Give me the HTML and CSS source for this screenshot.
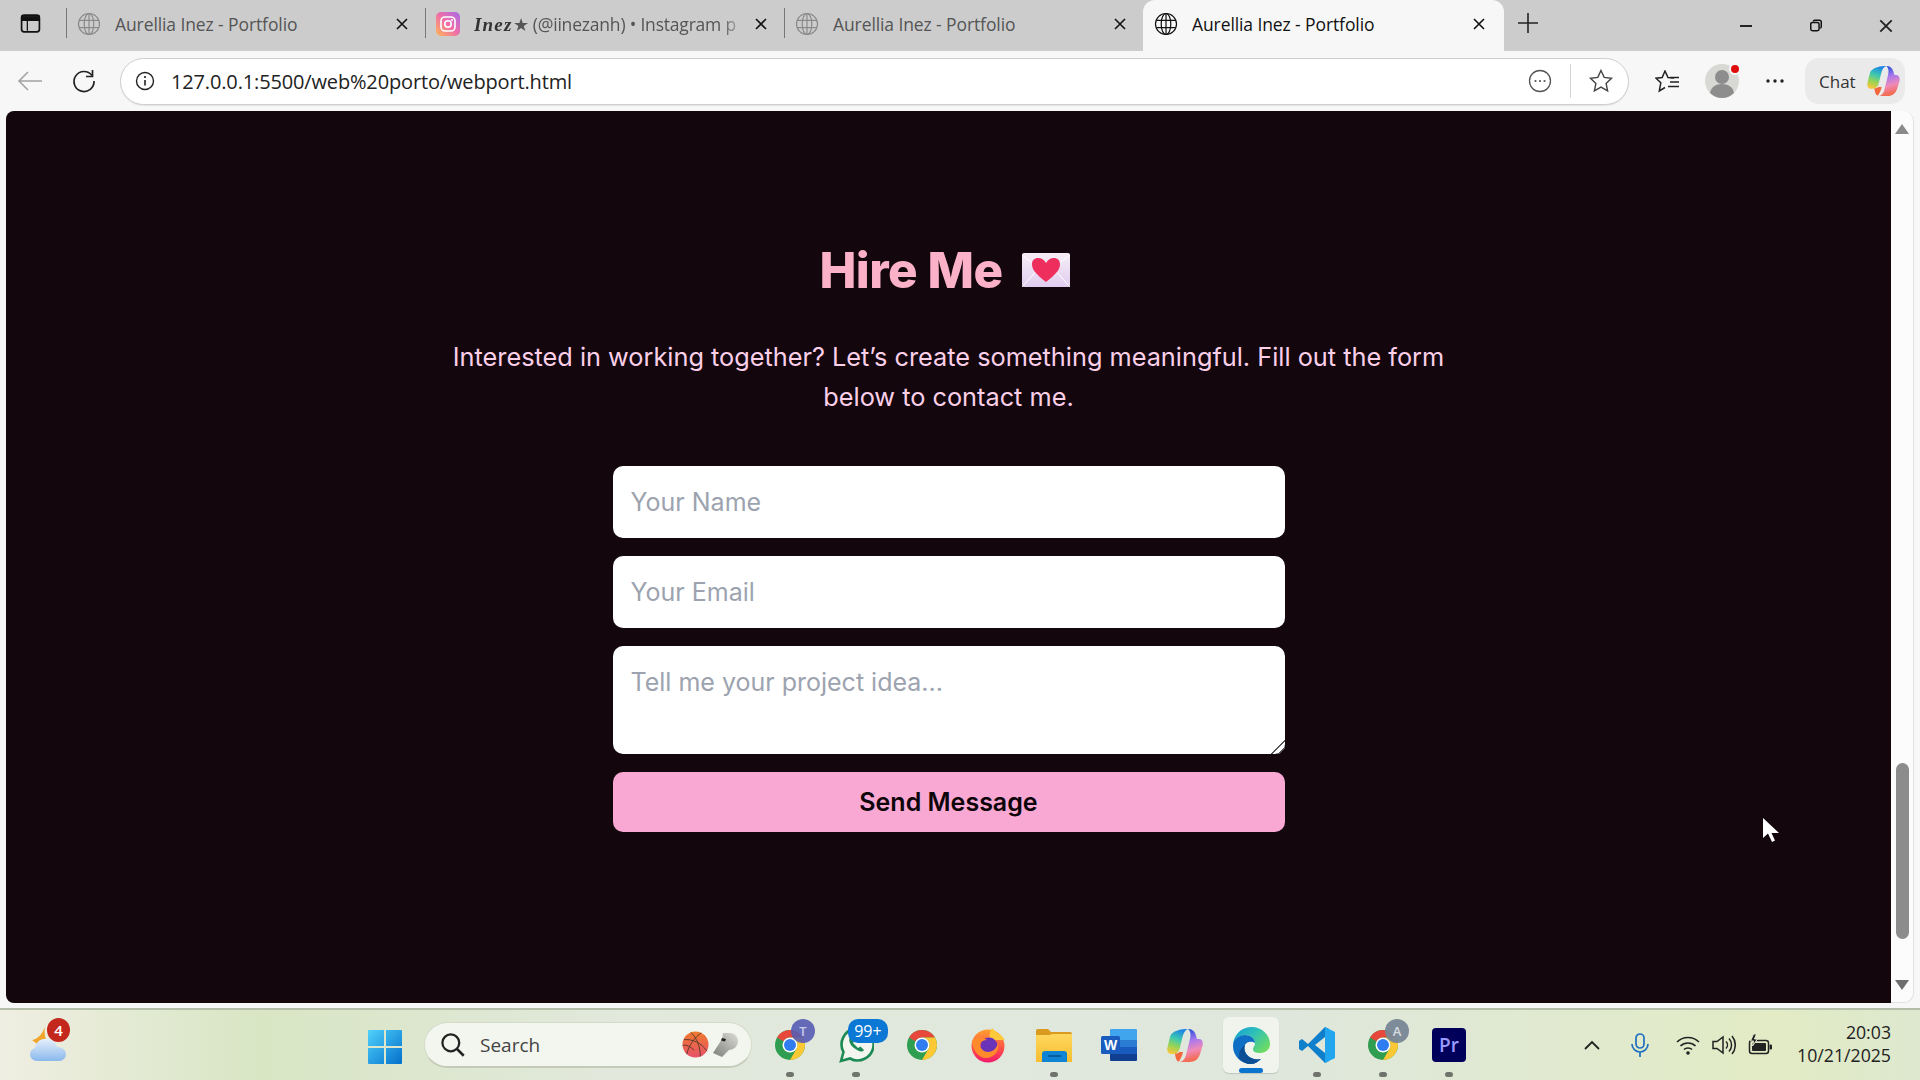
FILE: index.html
```html
<!DOCTYPE html>
<html lang="en">
<head>
    <meta charset="UTF-8">
    <title>Aurellia Inez - Portfolio</title>
    <link rel="stylesheet" href="styles.css">
</head>
<body>
    <svg class="defs" aria-hidden="true">
        <defs>
            <linearGradient id="igGrad" x1="0" y1="1" x2="1" y2="0"><stop offset="0" stop-color="#fdb653"/><stop offset=".5" stop-color="#f06fa8"/><stop offset="1" stop-color="#a869e8"/></linearGradient>
            <linearGradient id="winGrad" x1="0" y1="0" x2="1" y2="1"><stop offset="0" stop-color="#4fd2fb"/><stop offset="1" stop-color="#0470cb"/></linearGradient>
            <linearGradient id="cloudGrad" x1="0" y1="0" x2="0" y2="1"><stop offset="0" stop-color="#e6effb"/><stop offset="1" stop-color="#8ab8ec"/></linearGradient>
            <linearGradient id="copGrad" x1="0.6" y1="0" x2="0.3" y2="1"><stop offset="0" stop-color="#1b83e6"/><stop offset=".4" stop-color="#3ec8b0"/><stop offset=".7" stop-color="#96d455"/><stop offset="1" stop-color="#f8c63a"/></linearGradient>
            <linearGradient id="copGrad2" x1="0.4" y1="0" x2="0.6" y2="1"><stop offset="0" stop-color="#1f4fd6"/><stop offset=".35" stop-color="#a878ee"/><stop offset=".65" stop-color="#f08ab8"/><stop offset="1" stop-color="#f4643a"/></linearGradient>
            <linearGradient id="edgeGrad" x1="0" y1="0" x2="1" y2="0.7"><stop offset="0" stop-color="#139bd8"/><stop offset=".5" stop-color="#2fc1b8"/><stop offset="1" stop-color="#6cdb62"/></linearGradient>
            <linearGradient id="foxGrad" x1="0" y1="0" x2="0" y2="1"><stop offset="0" stop-color="#ffa02e"/><stop offset=".6" stop-color="#ff4f4a"/><stop offset="1" stop-color="#f0186a"/></linearGradient>
            <linearGradient id="folderGrad" x1="0" y1="0" x2="0" y2="1"><stop offset="0" stop-color="#ffd75e"/><stop offset="1" stop-color="#f6bd2f"/></linearGradient>
            <linearGradient id="letterGrad" x1="0" y1="0" x2="0" y2="1"><stop offset="0" stop-color="#f4eef5"/><stop offset="1" stop-color="#e2cdf0"/></linearGradient>
            <linearGradient id="ballGrad" x1="0" y1="0" x2="0" y2="1"><stop offset="0" stop-color="#ef7a2c"/><stop offset="1" stop-color="#e8516a"/></linearGradient>
            <linearGradient id="whistleGrad" x1="0" y1="1" x2="1" y2="0"><stop offset="0" stop-color="#7d7f7b"/><stop offset="1" stop-color="#dcdcd8"/></linearGradient>
            <symbol id="globe" viewBox="0 0 24 24">
                <circle cx="12" cy="12" r="10.5" fill="none" stroke="currentColor" stroke-width="1.2"/>
                <ellipse cx="12" cy="12" rx="4.8" ry="10.5" fill="none" stroke="currentColor" stroke-width="1.2"/>
                <path d="M12 1.5v21M2.3 8.3h19.4M2.3 15.7h19.4" fill="none" stroke="currentColor" stroke-width="1.2"/>
            </symbol>
            <symbol id="closeX" viewBox="0 0 14 14">
                <path d="M2 2l10 10M12 2L2 12" fill="none" stroke="currentColor" stroke-width="1.6"/>
            </symbol>
            <symbol id="chrome" viewBox="0 0 48 48">
                <circle cx="24" cy="24" r="20" fill="#2f9e50"/>
                <path d="M24 4A20 20 0 0 1 41.32 14H24a10 10 0 0 0-8.66 5L6.68 14A20 20 0 0 1 24 4z" fill="#e8483b"/>
                <path d="M24 14h17.32A20 20 0 0 1 24 44l8.66-15A10 10 0 0 0 24 14z" fill="#fcc934"/>
                <circle cx="24" cy="24" r="10" fill="#fff"/>
                <circle cx="24" cy="24" r="8" fill="#2f7df0"/>
            </symbol>
            <symbol id="copilot" viewBox="0 0 36 33">
                <path d="M21 0C25 0 27.500 2 28.500 5L30 10H32C35 10 36.500 13 35.500 17L33 25C31.500 30 28 33 22 33H12C15.500 33 18 30 19 26L23 10C24 5 23.500 2 21 0z" fill="url(#copGrad2)"/>
                <path d="M12 1C14 .3 17 0 21 0C18 1 16.500 4 15.500 8L12.500 20C11.800 23 9.500 25 6 25H4C1 25-.5 22 .5 18L3 8C4 4 8 2 12 1z" fill="url(#copGrad)"/>
                <path d="M8 24.500c2 0 3.500-.5 4.500-1.500l3.500 0c-.5 3-2 6-4 9.500-3 .5-4-7-4-8z" fill="#f4673c"/>
            </symbol>
        </defs>
    </svg>

    <div class="tabstrip">
        <div class="sidebar-btn">
            <svg width="21" height="21" viewBox="0 0 20 20"><rect x="1.500" y="2" width="17" height="16" rx="2.500" fill="none" stroke="#111" stroke-width="1.600"/><path d="M2 3h16v4H2zM7 7v10" fill="#111" stroke="#111" stroke-width="1.200"/></svg>
        </div>
        <div class="tab">
            <svg class="favicon dim"><use href="#globe"/></svg>
            <span class="tab-title">Aurellia Inez - Portfolio</span>
            <svg class="tab-close"><use href="#closeX"/></svg>
        </div>
        <div class="tab">
            <svg class="favicon" viewBox="0 0 24 24"><rect width="24" height="24" rx="5" fill="url(#igGrad)"/><rect x="5" y="5" width="14" height="14" rx="4" fill="none" stroke="#fff" stroke-width="1.600"/><circle cx="12" cy="12" r="3.200" fill="none" stroke="#fff" stroke-width="1.600"/><circle cx="16" cy="8" r="1" fill="#fff"/></svg>
            <span class="tab-title tab-fade"><i class="script">Inez</i>★ (@iinezanh) • Instagram p</span>
            <svg class="tab-close"><use href="#closeX"/></svg>
        </div>
        <div class="tab">
            <svg class="favicon dim"><use href="#globe"/></svg>
            <span class="tab-title">Aurellia Inez - Portfolio</span>
            <svg class="tab-close"><use href="#closeX"/></svg>
        </div>
        <div class="tab active">
            <svg class="favicon"><use href="#globe"/></svg>
            <span class="tab-title">Aurellia Inez - Portfolio</span>
            <svg class="tab-close"><use href="#closeX"/></svg>
        </div>
        <svg class="new-tab" width="22" height="22" viewBox="0 0 22 22"><path d="M11 1v20M1 11h20" stroke="#222" stroke-width="1.600"/></svg>
        <div class="win-controls">
            <svg width="14" height="16" viewBox="0 0 14 16"><path d="M1 8h12" stroke="#111" stroke-width="1.800"/></svg>
            <svg width="14" height="15" viewBox="0 0 16 16"><rect x="2" y="4.500" width="9.500" height="9.500" rx="2" fill="none" stroke="#111" stroke-width="1.700"/><path d="M5 3.500c0-1 .8-1.500 1.600-1.500h5.200C13 2 14 3 14 4.200v5.300c0 .8-.5 1.500-1.300 1.500" fill="none" stroke="#111" stroke-width="1.700"/></svg>
            <svg width="16" height="16" viewBox="0 0 14 14"><use href="#closeX"/></svg>
        </div>
    </div>

    <div class="toolbar">
        <svg class="tool-back" width="26" height="22" viewBox="0 0 26 22"><path d="M25 11H2M11 2l-9 9 9 9" fill="none" stroke="#a3a3a3" stroke-width="1.600"/></svg>
        <svg class="tool-reload" width="26" height="26" viewBox="0 0 26 26"><path d="M21 7.500A10 10 0 1 0 23 13" fill="none" stroke="#222" stroke-width="1.700"/><path d="M21.500 2v6.500H15" fill="none" stroke="#222" stroke-width="1.700"/></svg>
        <div class="address">
            <svg width="20" height="20" viewBox="0 0 20 20"><circle cx="10" cy="10" r="8.500" fill="none" stroke="#222" stroke-width="1.400"/><path d="M10 9v5.500" stroke="#222" stroke-width="1.600"/><circle cx="10" cy="6" r="1.100" fill="#222"/></svg>
            <span class="url">127.0.0.1:5500/web%20porto/webport.html</span>
            <svg class="addr-more" width="24" height="24" viewBox="0 0 24 24"><circle cx="12" cy="12" r="10.500" fill="none" stroke="#555" stroke-width="1.300"/><circle cx="7.500" cy="12" r="1.100" fill="#555"/><circle cx="12" cy="12" r="1.100" fill="#555"/><circle cx="16.500" cy="12" r="1.100" fill="#555"/></svg>
            <span class="addr-sep"></span>
            <svg width="26" height="26" viewBox="0 0 26 26"><path d="M13 2.500l3.200 6.900 7.300.9-5.400 5.100 1.500 7.400-6.600-3.700-6.600 3.700 1.500-7.400-5.400-5.100 7.300-.9z" fill="none" stroke="#444" stroke-width="1.400"/></svg>
        </div>
        <svg class="tool-favs" width="24" height="23" viewBox="0 0 24 23"><path d="M19 8l-6-.5L10 1 7.200 7.500 1 8.200l4.800 4.600L4.300 21 10 17.500" fill="none" stroke="#222" stroke-width="1.500"/><path d="M15 7.500h9M15 12h9M13 16.500h11" stroke="#222" stroke-width="1.500"/></svg>
        <div class="avatar">
            <svg width="34" height="34" viewBox="0 0 34 34"><circle cx="17" cy="17" r="17" fill="#d8d8d4"/><circle cx="17" cy="13" r="7" fill="#8d8d8d"/><path d="M5 29c1-6 6-9 12-9s11 3 12 9a17 17 0 0 1-24 0z" fill="#8d8d8d"/></svg>
            <span class="avatar-dot"></span>
        </div>
        <svg class="tool-more" width="22" height="6" viewBox="0 0 22 6"><circle cx="4" cy="3" r="1.700" fill="#222"/><circle cx="11" cy="3" r="1.700" fill="#222"/><circle cx="18" cy="3" r="1.700" fill="#222"/></svg>
        <div class="chat">
            <span>Chat</span>
            <svg width="33" height="30"><use href="#copilot"/></svg>
        </div>
    </div>

    <div class="viewport">
        <main class="page">
            <h2 class="hire-title">
                <span>Hire Me</span>
                <svg class="letter" width="48" height="34" viewBox="0 0 48 34">
                    <rect width="48" height="34" rx="2" fill="url(#letterGrad)"/>
                    <path d="M0 2l24 18L48 2M0 34l17-19M48 34L31 15" fill="none" stroke="#fff" stroke-width="1"/>
                    <path d="M24 29C14 21 10 17 10 11c0-4 3-6 6-6 3.500 0 6 1.500 8 5 2-3.500 4.500-5 8-5 3 0 6 2 6 6 0 6-4 10-14 18z" fill="#ee2f5e"/>
                </svg>
            </h2>
            <p class="hire-text">Interested in working together? Let’s create something meaningful. Fill out the form<br>below to contact me.</p>
            <form class="hire-form">
                <input type="text" placeholder="Your Name">
                <input type="email" placeholder="Your Email">
                <textarea placeholder="Tell me your project idea..."></textarea>
                <button type="button">Send Message</button>
            </form>
            <svg class="cursor" width="18" height="26" viewBox="0 0 18 26"><path d="M1 1v20l5-4.500 4 8.500 3-1.500-3.500-7.500H17z" fill="#fff"/></svg>
        </main>
        <div class="scrollbar">
            <span class="arrow-up"></span>
            <span class="thumb"></span>
            <span class="arrow-down"></span>
        </div>
    </div>

    <div class="taskbar">
        <div class="weather">
            <svg width="36" height="38" viewBox="0 0 36 38"><path d="M15 3c-1 7 0 12 4 16l-8 4-9-7c4 0 10-5 13-13z" fill="#f2a52b"/><path d="M7 37c-4 0-7-3-7-6.500S2.500 24.500 5 24c1-6 6-10 12-9 5 0 9 3 10 8 5 0 9 3 9 7s-3 7-7 7z" fill="url(#cloudGrad)"/></svg>
            <span class="badge badge-red">4</span>
        </div>
        <div class="start">
            <svg width="36" height="36" viewBox="0 0 36 36"><path d="M1 2a1 1 0 0 1 1-1h15v16H1zM19 1h15a1 1 0 0 1 1 1v15H19zM1 19h16v16H2a1 1 0 0 1-1-1zM19 19h16v15a1 1 0 0 1-1 1H19z" fill="url(#winGrad)"/></svg>
        </div>
        <div class="search">
            <svg width="27" height="27" viewBox="0 0 24 24"><circle cx="10.500" cy="10.500" r="7.500" fill="none" stroke="#222" stroke-width="2"/><path d="M16 16l6 6" stroke="#222" stroke-width="2.200"/></svg>
            <span class="search-label">Search</span>
            <svg class="search-ball" width="27" height="27" viewBox="0 0 28 28"><circle cx="14" cy="14" r="13.500" fill="url(#ballGrad)"/><path d="M2 9c8-1 18 3 24 12M9 1.500c6 5 10 14 10 25M20 2C14 6 7 14 5 24M.7 15c4-1 8 1 12 5" fill="none" stroke="#5d3a2e" stroke-width="1"/></svg>
            <svg width="25" height="25" viewBox="0 0 25 25"><path d="M10 1h7c5 0 8 4 8 8 0 5-4 9-9 9l-7 7-9-4L9 7z" fill="url(#whistleGrad)"/><path d="M9 6l4 1-1 2.500-4-1z" fill="#222"/></svg>
        </div>
        <div class="apps">
            <div class="app">
                <svg width="36" height="36"><use href="#chrome"/></svg>
                <span class="badge badge-t">T</span>
                <span class="app-dot"></span>
            </div>
            <div class="app">
                <svg width="36" height="36" viewBox="0 0 36 36"><path d="M3 34l2.500-9A16 16 0 1 1 12 31.500z" fill="#f3f6ee" stroke="#1c8a55" stroke-width="2.600"/><path d="M12 10c-2 3 0 8 4 11s8 5 10 2l-3.500-3.500-2.500 1.500-5-5 1.500-2.500L13 10z" fill="#1c8a55"/></svg>
                <span class="badge badge-wa">99+</span>
                <span class="app-dot"></span>
            </div>
            <div class="app">
                <svg width="36" height="36"><use href="#chrome"/></svg>
            </div>
            <div class="app">
                <svg width="36" height="36" viewBox="0 0 36 36"><circle cx="18" cy="19" r="16.500" fill="url(#foxGrad)"/><path d="M22 1c-2.500 4-3 8-2 12h14.500C33 8 26 6 22 1z" fill="#ffc93c"/><circle cx="19" cy="19" r="8.500" fill="#6a33b8"/><path d="M2 14c3-4 10-4 15-1-3 0-6 1-7 4 0 4 3 8 8 8s9-4 10-9c2 8-4 15-12 15C9 31 3 24 2 14z" fill="#ff8a2b"/></svg>
            </div>
            <div class="app">
                <svg width="36" height="33" viewBox="0 0 36 33"><path d="M0 2a2 2 0 0 1 2-2h10l3 3h19a2 2 0 0 1 2 2v3H0z" fill="#d99a1e"/><path d="M0 6h14l2-1h20v28H0z" fill="url(#folderGrad)"/><path d="M6 33V25a3 3 0 0 1 3-3h19a3 3 0 0 1 3 3v8z" fill="#0f84d4"/><path d="M12 27h13" stroke="#0a4f8f" stroke-width="1.500"/></svg>
                <span class="app-dot"></span>
            </div>
            <div class="app">
                <svg width="36" height="32" viewBox="0 0 36 32"><path d="M9 1a1 1 0 0 1 1-1h25a1 1 0 0 1 1 1v10H9z" fill="#41a5ee"/><rect x="9" y="11" width="27" height="7" fill="#2b7cd3"/><rect x="9" y="18" width="27" height="7" fill="#185abd"/><path d="M9 25h27v6a1 1 0 0 1-1 1H10a1 1 0 0 1-1-1z" fill="#103f91"/><rect x="0" y="7" width="19" height="18" rx="1.500" fill="#1a5cbe"/><text x="9.500" y="21" class="word-w">W</text></svg>
            </div>
            <div class="app">
                <svg width="36" height="33"><use href="#copilot"/></svg>
            </div>
            <div class="app app-active">
                <svg width="37" height="37" viewBox="0 0 37 37"><path d="M0 19C0 8 8 0 19 0c10 0 18 8 18 17 0 6-5 9-10 9-4 0-7-1-7-4 0-2 2-3 2-6 0-5-5-8-10-8C6 8 0 13 0 19z" fill="url(#edgeGrad)"/><path d="M0 19C0 12 6 8 12 8c5 0 10 3 10 8-3-2-8-2-10 2-2 5 1 12 9 14 2 .5 5 .5 7 0-3 3-7 5-10 5C8 37 0 29 0 19z" fill="#0f6fc4"/><path d="M12 18c-2 5 1 12 9 14 2 .5 5 .5 7 0-3 3-7 5-10 5-5 0-9-2-12-6 0 0-1-9 6-13z" fill="#0c4f94"/></svg>
                <span class="app-bar"></span>
            </div>
            <div class="app">
                <svg width="36" height="36" viewBox="0 0 36 36"><path d="M26 0L9 17l-6-5-3 2v8l3 2 6-5 17 17 4-2V2zM26 10v16l-10-8z" fill="#0f7fcb"/><path d="M26 0l10 5v26l-10 5z" fill="#21a6ef"/></svg>
                <span class="app-dot"></span>
            </div>
            <div class="app">
                <svg width="36" height="36"><use href="#chrome"/></svg>
                <span class="badge badge-a">A</span>
                <span class="app-dot"></span>
            </div>
            <div class="app">
                <div class="premiere">Pr</div>
                <span class="app-dot"></span>
            </div>
        </div>
        <div class="tray">
            <svg class="tray-chevron" width="16" height="10" viewBox="0 0 16 10"><path d="M1 9l7-7 7 7" fill="none" stroke="#222" stroke-width="1.800"/></svg>
            <svg class="tray-mic" width="18" height="24" viewBox="0 0 18 24"><rect x="5" y="1" width="8" height="14" rx="4" fill="none" stroke="#1f6fc0" stroke-width="1.700"/><path d="M1 11a8 8 0 0 0 16 0M9 19v5" fill="none" stroke="#1f6fc0" stroke-width="1.700"/></svg>
            <svg class="tray-wifi" width="24" height="20" viewBox="0 0 24 20"><path d="M1 7c6-6 16-6 22 0M4.500 11c4-4 11-4 15 0M8 14.500c2-2 6-2 8 0" fill="none" stroke="#222" stroke-width="1.600"/><circle cx="12" cy="18" r="1.800" fill="#222"/></svg>
            <svg class="tray-sound" width="24" height="22" viewBox="0 0 24 22"><path d="M1 7.500h4L11 3v16l-6-4.500H1z" fill="none" stroke="#222" stroke-width="1.500"/><path d="M14 7.500a5 5 0 0 1 0 7M17 4.500a9.500 9.500 0 0 1 0 13M20 2a14 14 0 0 1 0 18" fill="none" stroke="#222" stroke-width="1.500"/></svg>
            <svg class="tray-batt" width="24" height="22" viewBox="0 0 24 22"><rect x="1.500" y="6.500" width="19" height="13" rx="2.500" fill="none" stroke="#222" stroke-width="1.500"/><rect x="4" y="9" width="14" height="8" rx="1" fill="#222"/><rect x="21.500" y="10.500" width="2.500" height="5" rx="1" fill="#222"/><path d="M5.500 0L2.500 7h3l-1 5 5-7H6.500l2-5z" fill="#222" stroke="#e4ecd0" stroke-width="1"/></svg>
            <div class="clock">
                <span>20:03</span>
                <span>10/21/2025</span>
            </div>
        </div>
    </div>
</body>
</html>
```

FILE: styles.css
```css
* {
    box-sizing: border-box;
}
body {
    margin: 0;
    height: 1080px;
    overflow: hidden;
    display: flex;
    flex-direction: column;
    background-color: #f7f7f7;
    font-family: "Open Sans", sans-serif;
    color: #222;
}
.defs {
    display: block;
    width: 0;
    height: 0;
}

/* tab strip */
.tabstrip {
    height: 51px;
    flex: none;
    display: flex;
    align-items: center;
    background-color: #cccccc;
}
.sidebar-btn {
    width: 66px;
    flex: none;
    display: flex;
    justify-content: center;
    padding: 0 5px 5px 0;
}
.tab {
    width: 359px;
    height: 51px;
    flex: none;
    display: flex;
    align-items: center;
    padding: 0 16px 4px 11px;
    position: relative;
    font-size: 17.500px;
    color: #555;
}
.tab:nth-child(2),
.tab:nth-child(3),
.tab:nth-child(4) {
    background-image: linear-gradient(#777, #777);
    background-size: 1px 30px;
    background-position: left 8px;
    background-repeat: no-repeat;
}
.tab.active {
    background: #f7f7f7;
    border-radius: 12px 12px 0 0;
    color: #111;
    width: 361px;
    padding-right: 18px;
}
.favicon {
    width: 24px;
    height: 24px;
    flex: none;
    color: #111;
}
.favicon.dim {
    color: #8a8a8a;
}
.tab-title {
    margin-left: 14px;
    flex: 1;
    white-space: nowrap;
    overflow: hidden;
    letter-spacing: -0.1px;
}
.tab-fade {
    margin-right: 10px;
    letter-spacing: -0.2px;
    -webkit-mask-image: linear-gradient(to right, #000 92%, transparent);
    mask-image: linear-gradient(to right, #000 92%, transparent);
}
.script {
    font-family: "Liberation Serif", serif;
    font-weight: bold;
    font-size: 19px;
    letter-spacing: 1.200px;
    color: #333;
}
.tab-close {
    width: 14px;
    height: 14px;
    flex: none;
    color: #111;
}
.new-tab {
    margin: 0 0 5px 13px;
    flex: none;
}
.win-controls {
    margin-left: auto;
    width: 181px;
    padding-right: 26px;
    display: flex;
    justify-content: space-between;
    align-items: center;
}

/* toolbar */
.toolbar {
    height: 60px;
    flex: none;
    display: flex;
    align-items: center;
    padding: 0 15px 0 17px;
    background-color: #f7f7f7;
}
.tool-back {
    flex: none;
}
.tool-reload {
    flex: none;
    margin-left: 28px;
}
.address {
    width: 1509px;
    height: 47px;
    flex: none;
    margin-left: 23px;
    padding: 0 14px 0 14px;
    display: flex;
    align-items: center;
    background-color: #fff;
    border: 1px solid #cfcfcf;
    border-radius: 24px;
    box-shadow: 0 1px 1px rgba(0,0,0,0.08);
}
.url {
    flex: 1;
    margin-left: 16px;
    font-size: 20px;
    color: #222;
    letter-spacing: -0.15px;
}
.addr-more {
    flex: none;
}
.addr-sep {
    width: 1px;
    height: 34px;
    margin: 0 17px 0 18px;
    background-color: #d5d5d5;
}
.tool-favs {
    flex: none;
    margin-left: 26px;
}
.avatar {
    position: relative;
    flex: none;
    margin-left: 26px;
    height: 34px;
}
.avatar-dot {
    position: absolute;
    top: 1px;
    right: 0;
    width: 8px;
    height: 8px;
    border-radius: 50%;
    background-color: #e00b0b;
    box-shadow: 0 0 0 2px #f7f7f7;
}
.tool-more {
    flex: none;
    margin-left: 25px;
}
.chat {
    width: 100px;
    height: 46px;
    flex: none;
    margin-left: 19px;
    padding: 0 5px 0 14px;
    display: flex;
    align-items: center;
    justify-content: space-between;
    border-radius: 14px;
    background-color: #eaeaea;
    font-size: 17px;
    color: #333;
}

/* page area */
.viewport {
    height: 892px;
    flex: none;
    display: flex;
    margin: 0 6px;
}
.page {
    flex: 1;
    position: relative;
    display: flex;
    flex-direction: column;
    align-items: center;
    padding-top: 123px;
    background-color: #13060d;
    border-radius: 8px 0 0 8px;
    font-family: Inter, sans-serif;
}
.hire-title {
    margin: 0 0 30px;
    height: 72px;
    display: flex;
    align-items: center;
    gap: 19px;
    padding-right: 8px;
    font-size: 49.300px;
    font-weight: 800;
    color: #fbb1c8;
}
.hire-title span {
    letter-spacing: -0.5px;
}
.hire-text {
    margin: 1px 0 49px;
    font-size: 25.300px;
    line-height: 40px;
    text-align: center;
    color: #fbcfe8;
}
.hire-form {
    width: 672px;
    display: flex;
    flex-direction: column;
    gap: 18px;
}
.hire-form input,
.hire-form textarea {
    display: block;
    width: 100%;
    height: 72px;
    padding: 18px;
    border: none;
    border-radius: 10px;
    background-color: #fff;
    font-family: Inter, sans-serif;
    font-size: 25px;
    line-height: 36px;
    color: #222;
}
.hire-form textarea {
    height: 108px;
    resize: vertical;
}
.hire-form textarea::-webkit-resizer {
    background: linear-gradient(135deg, transparent 52%, #555 52%, #555 60%, transparent 60%, transparent 74%, #555 74%, #555 82%, transparent 82%);
}
.hire-form input::placeholder,
.hire-form textarea::placeholder {
    color: #9ca3af;
    opacity: 1;
}
.hire-form button {
    height: 60px;
    border: none;
    border-radius: 10px;
    background-color: #f9a8d4;
    font-family: Inter, sans-serif;
    font-size: 25px;
    font-weight: 600;
    color: #0d0509;
}
.cursor {
    position: absolute;
    left: 1756px;
    top: 706px;
}
.scrollbar {
    width: 23px;
    flex: none;
    display: flex;
    flex-direction: column;
    align-items: center;
    padding-top: 13px;
    background-color: #fcfcfc;
    border-right: 1px solid #e2e2e2;
    border-bottom: 1px solid #e2e2e2;
    border-radius: 0 10px 10px 0;
}
.arrow-up {
    width: 0;
    height: 0;
    border-left: 7px solid transparent;
    border-right: 7px solid transparent;
    border-bottom: 10px solid #8a8a8a;
}
.thumb {
    width: 13px;
    height: 176px;
    margin-top: 629px;
    border-radius: 7px;
    background-color: #8c8c8c;
}
.arrow-down {
    width: 0;
    height: 0;
    margin-top: 41px;
    border-left: 7px solid transparent;
    border-right: 7px solid transparent;
    border-top: 10px solid #6e6e6e;
}

/* taskbar */
.taskbar {
    height: 72px;
    margin-top: 5px;
    flex: none;
    display: flex;
    align-items: center;
    padding: 0 29px 0 30px;
    border-top: 2px solid #b4bda8;
    background: linear-gradient(90deg, #efeee2 0, #d8e6c4 260px, #e2e8dc 620px, #dfe7dc 1300px, #e2ebc4 1780px, #dde8cf 1920px);
}
.weather {
    position: relative;
    width: 36px;
    height: 38px;
    flex: none;
    margin-top: -4px;
}
.badge {
    position: absolute;
    display: flex;
    align-items: center;
    justify-content: center;
    color: #fff;
    font-weight: 600;
}
.badge-red {
    top: -6px;
    left: 17px;
    width: 23px;
    height: 24px;
    border-radius: 50%;
    background-color: #c4281c;
    font-size: 15px;
}
.badge-t {
    top: 2px;
    left: 29px;
    width: 24px;
    height: 24px;
    border-radius: 50%;
    background-color: rgba(88, 92, 180, 0.9);
    font-size: 13px;
    color: #c8cbea;
}
.badge-wa {
    top: 2px;
    left: 20px;
    width: 40px;
    height: 24px;
    border-radius: 10px;
    background-color: #0a78d4;
    font-size: 16px;
    font-weight: 400;
}
.badge-a {
    top: 2px;
    left: 30px;
    width: 24px;
    height: 24px;
    border-radius: 50%;
    background-color: rgba(120, 135, 150, 0.95);
    font-size: 13px;
    color: #d5dbe0;
}
.start {
    margin-left: 301px;
    width: 36px;
    height: 36px;
    flex: none;
    margin-top: 3px;
}
.search {
    width: 328px;
    height: 46px;
    flex: none;
    margin-left: 21px;
    padding: 0 13px 0 14px;
    display: flex;
    align-items: center;
    border-radius: 23px;
    background-color: #f3f6ef;
    border: 1px solid #d5dbc9;
    border-bottom: 2px solid #c4cbb8;
}
.search-label {
    flex: 1;
    margin-left: 14px;
    font-size: 19px;
    color: #444;
}
.search-ball {
    margin-right: 4px;
}
.word-w {
    font-family: "Liberation Sans", sans-serif;
    font-size: 14px;
    font-weight: 700;
    fill: #fff;
    text-anchor: middle;
}
.apps {
    display: flex;
    gap: 9.900px;
    margin-left: 10px;
}
.app {
    position: relative;
    width: 56px;
    height: 56px;
    flex: none;
    display: flex;
    align-items: center;
    justify-content: center;
}
.app-active {
    background-color: #f0f4ec;
    border-radius: 6px;
    box-shadow: 0 1px 1px rgba(0,0,0,0.15);
}
.app-dot {
    position: absolute;
    bottom: -4px;
    left: 24px;
    width: 8px;
    height: 5px;
    border-radius: 3px;
    background-color: #6f736c;
}
.app-bar {
    position: absolute;
    bottom: 0;
    left: 16px;
    width: 24px;
    height: 5px;
    border-radius: 3px;
    background-color: #0a74cf;
}
.premiere {
    width: 34px;
    height: 34px;
    border-radius: 4px;
    background-color: #00005b;
    color: #9a9aff;
    font-family: "Open Sans", sans-serif;
    font-size: 19px;
    font-weight: 600;
    line-height: 34px;
    text-align: center;
}
.tray {
    flex: 1;
    display: flex;
    align-items: center;
    padding-left: 107px;
}
.tray-chevron {
    flex: none;
}
.tray-mic {
    flex: none;
    margin-left: 31px;
}
.tray-wifi {
    flex: none;
    margin-left: 27px;
}
.tray-sound {
    flex: none;
    margin-left: 12px;
}
.tray-batt {
    flex: none;
    margin-left: 12px;
}
.clock {
    margin-left: auto;
    display: flex;
    flex-direction: column;
    align-items: flex-end;
    font-size: 17.700px;
    line-height: 23px;
    color: #222;
    margin-bottom: 3px;
}
```
